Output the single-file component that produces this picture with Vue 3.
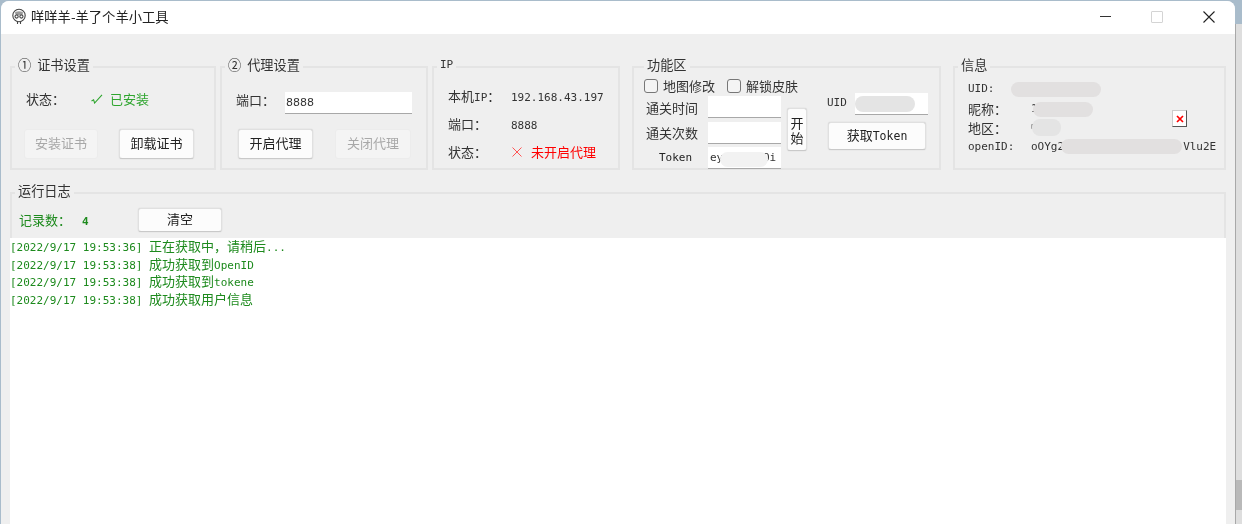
<script setup>
const logs = [
  { ts: '[2022/9/17 19:53:36] ', text: '正在获取中，请稍后', tail: '...' },
  { ts: '[2022/9/17 19:53:38] ', text: '成功获取到', tail: 'OpenID' },
  { ts: '[2022/9/17 19:53:38] ', text: '成功获取到', tail: 'tokene' },
  { ts: '[2022/9/17 19:53:38] ', text: '成功获取用户信息', tail: '' },
]
</script>

<template>
  <div class="screen">
    <div class="window">
      <header class="titlebar">
        <svg class="logo" viewBox="0 0 16 16" width="16" height="17" fill="none" stroke="#444" stroke-width="1.1">
          <circle cx="8" cy="7" r="6.2" />
          <ellipse cx="8" cy="4.6" rx="4" ry="1.9" fill="#9a9a9a" stroke="none" />
          <circle cx="5.6" cy="8" r="1.6" />
          <circle cx="10.4" cy="8" r="1.6" />
          <path d="M6.5 13.2v2.4M9.5 13.2v2.4" />
        </svg>
        <span class="title">咩咩羊-羊了个羊小工具</span>
        <div class="controls">
          <span class="ctl min"></span>
          <span class="ctl max"></span>
          <svg class="close" viewBox="0 0 12 12" width="12" height="12" stroke="#222" stroke-width="1.1"><path d="M.5.5l11 11M11.5.5l-11 11" /></svg>
        </div>
      </header>

      <main class="body">
        <section class="top">
          <fieldset class="group g1">
            <legend class="big">① 证书设置</legend>
            <div class="row status-row">
              <span class="label">状态：</span>
              <span class="ok">
                <svg class="mark" viewBox="0 0 12 10" width="12" height="10" fill="none" stroke="#2ea52e" stroke-width="1.1"><path d="M.5 7L2.6 5.8 3.6 9 11 .8" /></svg>已安装
              </span>
            </div>
            <div class="buttons">
              <button class="btn ghost">安装证书</button>
              <button class="btn">卸载证书</button>
            </div>
          </fieldset>

          <fieldset class="group g2">
            <legend class="big">② 代理设置</legend>
            <div class="row port-row">
              <span class="label">端口：</span>
              <span class="input wide">8888</span>
            </div>
            <div class="buttons">
              <button class="btn">开启代理</button>
              <button class="btn ghost">关闭代理</button>
            </div>
          </fieldset>

          <fieldset class="group g3">
            <legend class="ip-legend">IP</legend>
            <dl class="ip-grid">
              <dt>本机<span class="mono">IP</span>：</dt><dd class="mono">192.168.43.197</dd>
              <dt>端口：</dt><dd class="mono">8888</dd>
              <dt>状态：</dt>
              <dd class="bad">
                <svg class="x" viewBox="0 0 10 10" width="10" height="10" stroke="#f55" stroke-width="1"><path d="M.5.5l9 9M9.5.5l-9 9" /></svg>未开启代理
              </dd>
            </dl>
          </fieldset>

          <fieldset class="group g4">
            <legend class="big">功能区</legend>
            <div class="func">
              <div class="func-left">
                <div class="checks">
                  <label class="check"><i></i>地图修改</label>
                  <label class="check"><i></i>解锁皮肤</label>
                </div>
                <div class="func-fields">
                  <div class="fields">
                    <span class="f-label">通关时间</span><span class="input f"></span>
                    <span class="f-label">通关次数</span><span class="input f"></span>
                    <span class="f-label token">Token</span>
                    <span class="input f token-input">ey7hbGciOi<b class="pill p-token"></b></span>
                  </div>
                  <button class="btn start">开始</button>
                </div>
              </div>
              <div class="func-right">
                <div class="uid-row">
                  <span class="uid-label">UID</span>
                  <span class="input uid"><b class="pill p-uid"></b></span>
                </div>
                <button class="btn token-btn">获取<span class="tk">Token</span></button>
              </div>
            </div>
          </fieldset>

          <fieldset class="group g5">
            <legend class="big">信息</legend>
            <div class="info">
              <div class="info-line l1"><span class="k mono">UID:</span><span class="v"><b class="pill p-i1"></b></span></div>
              <div class="info-line l2"><span class="k">昵称：</span><span class="v mono">1<b class="pill p-i2"></b></span></div>
              <div class="info-line l3">
                <span class="k">地区：</span><span class="v mono">中<b class="pill p-i3"></b></span>
                <span class="broken"><svg viewBox="0 0 8 8" width="8" height="8" stroke="#f00" stroke-width="1.7"><path d="M1 1l6 6M7 1l-6 6" /></svg></span>
              </div>
              <div class="info-line l4"><span class="k mono">openID:</span><span class="v mono oid">oOYg2<b class="pill p-i4"></b><span class="tail">Vlu2E</span></span></div>
            </div>
          </fieldset>
        </section>

        <fieldset class="group log-group">
          <legend class="big">运行日志</legend>
          <div class="log-bar">
            <span class="count">记录数： <b>4</b></span>
            <button class="btn clear">清空</button>
          </div>
        </fieldset>
        <div class="log">
          <p v-for="(l, i) in logs" :key="i"><span class="ts">{{ l.ts }}</span>{{ l.text }}<span class="ts">{{ l.tail }}</span></p>
        </div>
      </main>
    </div>
    <aside class="outside"></aside>
  </div>
</template>

<style>
html, body { margin: 0; padding: 0; background: #dcdcdc; overflow: hidden; }
</style>

<style scoped>
.screen {
  display: flex;
  width: 1242px;
  height: 524px;
  overflow: hidden;
  background: #a9bccb;
  font-family: "Noto Sans CJK SC", "Liberation Sans", sans-serif;
  font-size: 13px;
  color: #333;
}
.window {
  width: 1234px;
  margin-left: 1px;
  margin-top: 1px;
  display: flex;
  flex-direction: column;
  background: #efefef;
  border-radius: 8px 8px 0 0;
  overflow: hidden;
  filter: blur(0.35px);
}
.outside {
  flex: 1;
  margin-top: 24px;
  border-left: 1px solid #a8a8a8;
  background: linear-gradient(#dedede 0 456px, #b9b9b9 456px 486px, #dedede 486px);
}
.titlebar {
  height: 33px;
  flex: none;
  display: flex;
  align-items: center;
  background: #fff;
  padding-left: 10px;
}
.logo { margin-right: 4px; margin-bottom: 2px; }
.title { font-size: 13.3px; color: #222; padding-bottom: 3px; }
.controls { margin-left: auto; display: flex; align-items: center; height: 100%; padding-bottom: 2px; box-sizing: border-box; }
.ctl { display: block; }
.min { width: 11px; height: 1px; background: #333; margin-right: 40px; }
.max { width: 10px; height: 10px; border: 1px solid #d4d4d4; border-radius: 1px; margin-right: 40px; }
.close { margin-right: 20px; }

.body { flex: 1; display: flex; flex-direction: column; padding: 0 9px; min-height: 0; }
.top { display: flex; margin-top: 23px; height: 113px; flex: none; }

.group {
  margin: 0;
  min-width: 0;
  padding: 0;
  border: 2px solid #e4e4e4;
  box-sizing: border-box;
}
.group legend { padding: 0 3px; height: 20px; line-height: 16px; margin-left: 3px; }
.big { font-size: 13.2px; color: #333; word-spacing: 3px; }
.ip-legend { font-family: "DejaVu Sans Mono", monospace; font-size: 11px; }
.g4 legend { margin-left: 10px; }
.g1 { width: 206px; margin-right: 4px; }
.g2 { width: 208px; margin-right: 4px; }
.g3 { width: 188px; margin-right: 12px; }
.g4 { width: 309px; margin-right: 12px; }
.g5 { width: 273px; }

.label { color: #333; font-size: 13px; }
.row { display: flex; align-items: center; }
.status-row { height: 20px; margin-top: 11px; padding-left: 14px; }
.status-row .label { width: 65px; }
.ok { color: #2ea52e; font-size: 13px; display: flex; align-items: center; }
.mark { margin-right: 7px; margin-top: 2px; }
.port-row { height: 24px; margin-top: 14px; padding-left: 14px; }
.port-row .label { width: 49px; padding-bottom: 7px; }
.input {
  display: block;
  background: #fff;
  border-bottom: 1px solid #a8a8a8;
  box-sizing: border-box;
  position: relative;
  overflow: hidden;
}
.wide { width: 127px; height: 22px; line-height: 21px; padding-left: 1px; font-family: "DejaVu Sans", sans-serif; font-size: 11px; }
.buttons { display: flex; justify-content: space-between; padding: 0 20px 0 12px; }
.status-row + .buttons { margin-top: 21px; }
.port-row + .buttons { margin-top: 14px; }
.g2 .buttons { padding: 0 15px 0 16px; }
.btn {
  font: inherit;
  font-size: 13px;
  color: #222;
  width: 75px;
  height: 30px;
  padding: 0 0 4px;
  background: #fcfcfc;
  border: 1px solid #e0e0e0;
  border-bottom-color: #c9c9c9;
  border-radius: 3px;
  box-shadow: 0 0 1px #bbb;
}
.ghost { width: 74px; color: #a8a8a8; background: #f4f4f4; border-color: #ececec; box-shadow: none; }
.g2 .ghost { width: 76px; }

.ip-grid {
  margin: 6px 0 0;
  padding-left: 14px;
  display: grid;
  grid-template-columns: 63px 1fr;
  grid-auto-rows: 28px;
  align-items: center;
}
.ip-grid dt { font-size: 13px; color: #333; padding-bottom: 3px; }
.ip-grid dd { margin: 0; }
.mono { font-family: "DejaVu Sans Mono", monospace; font-size: 11px; color: #333; }
.bad { color: #f00; font-size: 13px; display: flex; align-items: center; padding-bottom: 3px; }
.x { margin: 0 9px 0 1px; }

.func { display: flex; height: 90px; }
.func-left { width: 178px; padding-left: 10px; box-sizing: border-box; }
.checks { display: flex; gap: 12px; height: 20px; align-items: center; margin-top: -2px; }
.check { display: flex; align-items: center; font-size: 13px; color: #333; }
.check i { width: 12px; height: 12px; border: 1px solid #777; border-radius: 3px; background: #f4f4f4; margin: 2px 5px 0 0; }
.func-fields { display: flex; align-items: flex-start; margin-left: 2px; }
.fields { display: grid; grid-template-columns: 62px 73px; grid-auto-rows: 24.5px; row-gap: 1px; align-items: center; }
.f-label { font-size: 13px; color: #333; }
.f-label.token { font-family: "DejaVu Sans Mono", monospace; font-size: 11px; padding-left: 13px; padding-bottom: 2px; color: #222; }
.f { height: 22px; }
.token-input { font-family: "DejaVu Sans Mono", monospace; font-size: 11px; line-height: 22px; padding-left: 2px; white-space: nowrap; }
.start { width: 20px; height: 43px; margin-left: 6px; line-height: 15px; margin-top: 13px; padding: 0; }
.func-right { padding-left: 15px; }
.uid-row { display: flex; align-items: center; height: 24px; margin-top: 15px; }
.uid-label { font-family: "DejaVu Sans Mono", monospace; font-size: 11px; width: 28px; color: #333; padding-bottom: 3px; }
.uid { width: 73px; height: 22px; }
.token-btn { width: 98px; height: 28px; margin-top: 6px; margin-left: 1px; }
.tk { font-family: "DejaVu Sans Mono", monospace; font-size: 11.5px; }

.info { padding-left: 13px; margin-top: 2px; }
.info-line { display: flex; align-items: center; position: relative; }
.l1 { height: 19px; }
.l2 { height: 20px; }
.l3 { height: 18px; }
.l4 { height: 20px; }
.k { width: 63px; font-size: 13px; color: #333; }
.k.mono { font-size: 11px; }
.l1 .k { width: 43px; }
.v { position: relative; height: 19px; line-height: 19px; flex: none; }
.oid { white-space: nowrap; }
.tail { margin-left: 119px; }
.broken {
  position: absolute;
  left: 204px;
  top: -8px;
  width: 15px;
  height: 17px;
  display: flex;
  align-items: center;
  justify-content: center;
  background: #fff;
  border: 1px solid #ccc;
  border-right-color: #555;
  border-bottom-color: #555;
  box-sizing: border-box;
}

.pill { position: absolute; display: block; background: #e2e0e0; border-radius: 8px; }
.p-token { left: 12px; top: 5px; width: 48px; height: 15px; background: #f2f2f2; }
.p-uid { left: 0; top: 3px; width: 60px; height: 16px; background: #e4e4e4; }
.p-i1 { left: 0; top: 3px; width: 90px; height: 15px; }
.p-i2 { left: 2px; top: 3px; width: 60px; height: 15px; }
.p-i3 { left: 1px; top: 1px; width: 29px; height: 17px; background: #e4e4e4; }
.p-i4 { left: 30px; top: 2px; width: 121px; height: 15px; }

.log-group {
  flex: none;
  height: 55px;
  border-bottom: 0;
  margin-top: 13px;
  width: 1216px;
}
.log-bar { display: flex; align-items: center; height: 24px; margin-top: 5px; padding-left: 7px; }
.count { width: 119px; color: #1d8a1d; font-size: 13px; padding-bottom: 2px; }
.count b { font-family: "DejaVu Sans Mono", monospace; font-size: 11px; margin-left: 8px; }
.clear { width: 84px; height: 24px; }
.log {
  flex: 1;
  width: 1216px;
  background: #fff;
  color: #1d8a1d;
  font-size: 13px;
}
.log p { margin: 0; height: 17.6px; line-height: 15px; white-space: pre; }
.ts { font-family: "DejaVu Sans Mono", monospace; font-size: 11px; }
</style>
